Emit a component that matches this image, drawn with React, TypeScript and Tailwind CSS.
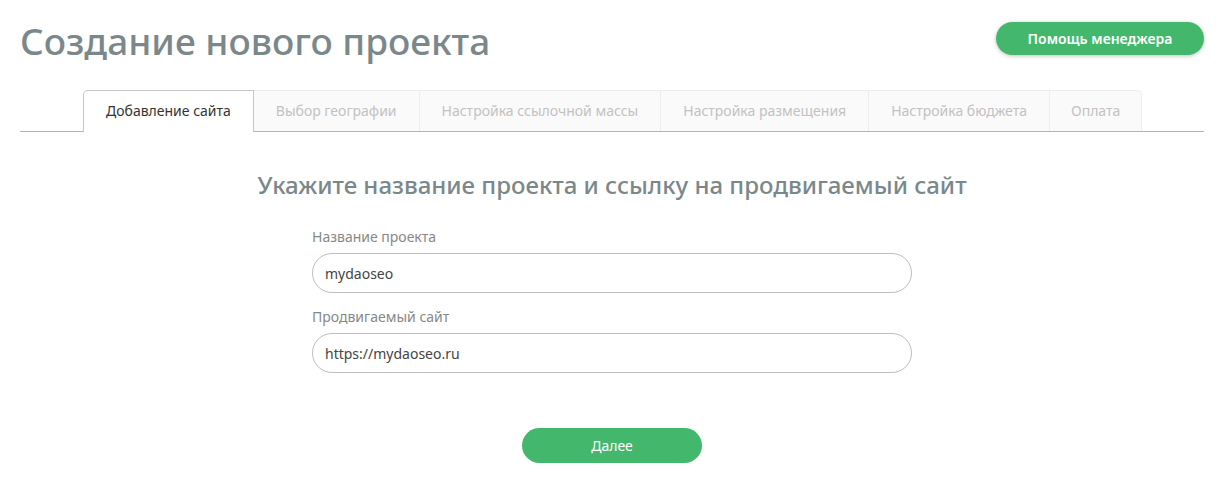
const tabs = [
  'Добавление сайта',
  'Выбор географии',
  'Настройка ссылочной массы',
  'Настройка размещения',
  'Настройка бюджета',
  'Оплата',
];

const App = () => {
  return (
    <div className="min-h-[479px] bg-white px-5 font-['Noto_Sans',sans-serif]">
      <div className="flex items-start justify-between pt-[18px]">
        <h1 className="text-[37px] leading-[46px] font-medium text-[#7b888b]">
          Создание нового проекта
        </h1>
        <button className="mt-1 h-[33px] w-[208px] rounded-full bg-[#43b86d] text-[14px] font-semibold text-white shadow-[0_1px_4px_rgba(0,0,0,0.25)]">
          Помощь менеджера
        </button>
      </div>

      <div className="mt-[26px] flex border-b border-[#b3b3b3] pl-[63px]">
        {tabs.map((tab, i) => (
          <div
            key={tab}
            className={
              i === 0
                ? '-mb-px h-[42px] rounded-tl-[5px] border border-b-0 border-[#c6c6c6] bg-white px-[22px] pt-[9px] text-[14px] text-[#333]'
                : i === tabs.length - 1
                  ? 'h-[41px] rounded-tr-[5px] border border-l-0 border-b-0 border-[#eee] bg-[#fafafa] px-[21px] pt-[9px] text-[14px] text-[#c2c2c2]'
                  : 'h-[41px] border border-l-0 border-b-0 border-[#eee] bg-[#fafafa] px-[22px] pt-[9px] text-[14px] text-[#c2c2c2]'
            }
          >
            {tab}
          </div>
        ))}
      </div>

      <h2 className="mt-[37px] text-center text-[24px] leading-[32px] font-medium text-[#7b888b]">
        Укажите название проекта и ссылку на продвигаемый сайт
      </h2>

      <div className="mx-auto mt-[26px] w-[600px]">
        <label className="block text-[14px] leading-[20px] text-[#888]">Название проекта</label>
        <input
          readOnly
          value="mydaoseo"
          className="mt-[6px] h-[40px] w-full rounded-full border border-[#bdbdbd] px-3 text-[14px] text-[#444] outline-none"
        />
        <label className="mt-[14px] block text-[14px] leading-[20px] text-[#888]">Продвигаемый сайт</label>
        <input
          readOnly
          value="https://mydaoseo.ru"
          className="mt-[6px] h-[40px] w-full rounded-full border border-[#bdbdbd] px-3 text-[14px] text-[#444] outline-none"
        />
      </div>

      <div className="mt-[55px] flex justify-center">
        <button className="h-[35px] w-[180px] rounded-full bg-[#43b86d] text-[14px] text-white">
          Далее
        </button>
      </div>
    </div>
  );
};

export default App;
